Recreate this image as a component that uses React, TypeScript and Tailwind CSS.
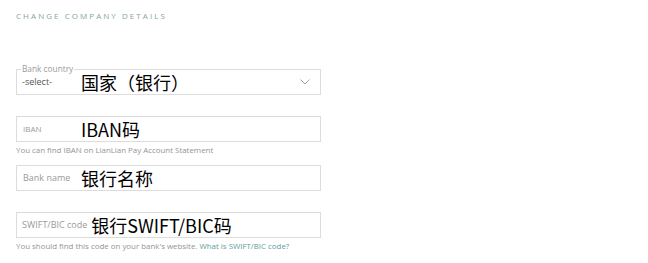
export default function App() {
  const font = { fontFamily: '"Open Sans", "Noto Sans CJK SC", sans-serif' }
  const cjk = { fontFamily: '"Noto Sans CJK SC", sans-serif' }
  return (
    <div className="w-[648px] h-[263px] bg-white overflow-hidden pl-4 pt-[11px]" style={font}>
      {/* Title */}
      <h1 className="text-[8px] leading-[10px] tracking-[2.05px] text-[#86a5a2] font-normal">
        CHANGE COMPANY DETAILS
      </h1>

      {/* Bank country */}
      <div className="relative mt-[48px] w-[305px] h-[26px] border border-[#dcdcdc] flex items-center pl-[5px] pr-[10px]">
        <span className="absolute left-[4px] -top-[6px] bg-white px-[1px] text-[8.3px] leading-[10px] text-[#9a9a9a]">
          Bank country
        </span>
        <span className="w-[59px] shrink-0 text-[9px] text-[#555]">-select-</span>
        <span className="text-[18px] leading-[22px] text-black" style={cjk}>国家（银行）</span>
        <svg className="ml-auto" width="10" height="6" viewBox="0 0 10 6" fill="none">
          <path d="M0.5 0.5 L5 5 L9.5 0.5" stroke="#9b9b9b" strokeWidth="0.9" />
        </svg>
      </div>

      {/* IBAN */}
      <div className="mt-[21px] w-[305px] h-[26px] border border-[#dcdcdc] flex items-center pl-[6px]">
        <span className="w-[58px] shrink-0 text-[8px] text-[#9a9a9a]">IBAN</span>
        <span className="text-[18px] leading-[22px] text-black" style={cjk}>IBAN码</span>
      </div>
      <p className="mt-[3px] text-[7.9px] leading-[10px] text-[#949494]">
        You can find IBAN on LianLian Pay Account Statement
      </p>

      {/* Bank name */}
      <div className="mt-[10px] w-[305px] h-[26px] border border-[#dcdcdc] flex items-center pl-[6px]">
        <span className="w-[58px] shrink-0 text-[9px] text-[#9a9a9a]">Bank name</span>
        <span className="text-[18px] leading-[22px] text-black" style={cjk}>银行名称</span>
      </div>

      {/* SWIFT/BIC */}
      <div className="mt-[21px] w-[305px] h-[26px] border border-[#dcdcdc] flex items-center pl-[5px]">
        <span className="shrink-0 text-[9px] text-[#9a9a9a] mr-[4px]">SWIFT/BIC code</span>
        <span className="text-[18px] leading-[22px] text-black" style={cjk}>银行SWIFT/BIC码</span>
      </div>
      <p className="mt-[3px] text-[7.9px] leading-[10px] text-[#949494]">
        You should find this code on your bank's website.{' '}
        <a href="#" className="text-[#5d9f97]">What is SWIFT/BIC code?</a>
      </p>
    </div>
  )
}
